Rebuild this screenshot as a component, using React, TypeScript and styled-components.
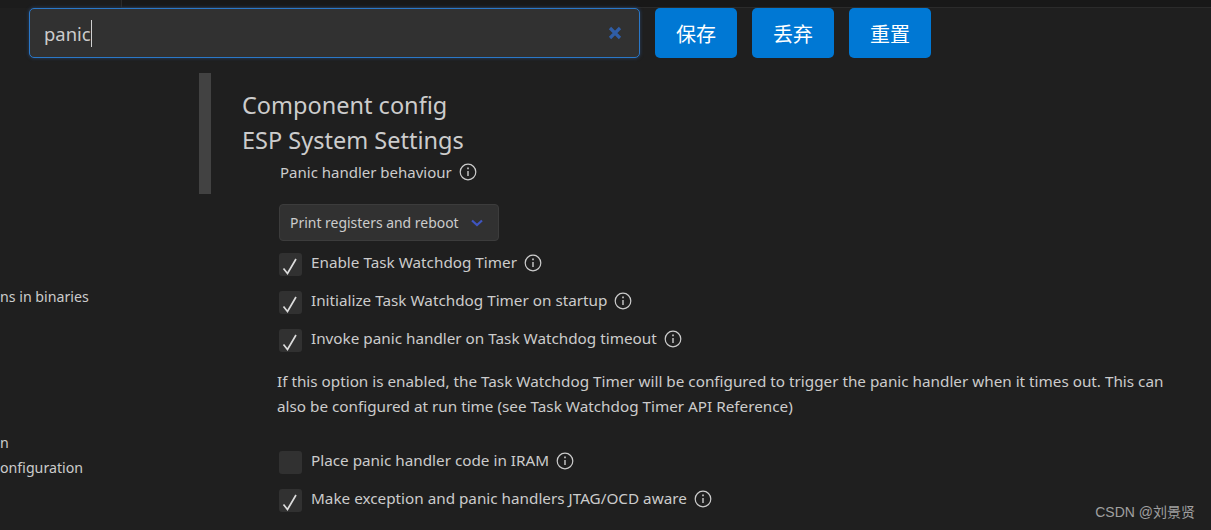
import React from "react";
import styled, { createGlobalStyle } from "styled-components";

const GlobalStyle = createGlobalStyle`
  html, body {
    margin: 0;
    padding: 0;
    background: #1f1f1f;
  }
  body {
    width: 1211px;
    height: 530px;
    overflow: hidden;
    font-family: "Noto Sans", "Noto Sans CJK SC", sans-serif;
  }
`;

const sideItems = [
  { label: "ns in binaries", top: 288 },
  { label: "n", top: 434 },
  { label: "onfiguration", top: 459 },
];

const options = [
  { label: "Enable Task Watchdog Timer", checked: true },
  { label: "Initialize Task Watchdog Timer on startup", checked: true },
  { label: "Invoke panic handler on Task Watchdog timeout", checked: true },
];

const lateOptions = [
  { label: "Place panic handler code in IRAM", checked: false },
  { label: "Make exception and panic handlers JTAG/OCD aware", checked: true },
];

const InfoIcon = () => (
  <InfoSvg viewBox="0 0 18 18" fill="none" stroke="currentColor">
    <circle cx="9" cy="9" r="7.8" strokeWidth="1.2" />
    <path d="M9 8v5" strokeWidth="1.4" />
    <path d="M9 4.6v1.7" strokeWidth="1.6" />
  </InfoSvg>
);

const CheckRow = ({ label, checked }: { label: string; checked: boolean }) => (
  <Row>
    <CheckBox>
      {checked && (
        <svg viewBox="0 0 23 23" width="23" height="23" fill="none">
          <path d="M4.5 15.5l4 5L17 6" stroke="#dcdcdc" strokeWidth="1.7" />
        </svg>
      )}
    </CheckBox>
    <RowLabel>{label}</RowLabel>
    <InfoIcon />
  </Row>
);

const App = () => {
  return (
    <Page>
      <GlobalStyle />
      <TopStrip>
        <TopStripLeft />
        <TopStripRight />
      </TopStrip>
      <Toolbar>
        <SearchBox>
          <SearchText>
            panic
            <Caret />
          </SearchText>
          <svg viewBox="0 0 14 14" width="14" height="14" fill="none">
            <path d="M2 2l10 10M12 2L2 12" stroke="#2f5da6" strokeWidth="3.2" />
          </svg>
        </SearchBox>
        <ActionButton>保存</ActionButton>
        <ActionButton>丢弃</ActionButton>
        <ActionButton>重置</ActionButton>
      </Toolbar>
      <Main>
        <Sidebar>
          {sideItems.map((item) => (
            <SideItem key={item.label} $top={item.top}>
              {item.label}
            </SideItem>
          ))}
        </Sidebar>
        <ScrollThumb />
        <Content>
          <Heading>Component config</Heading>
          <Heading>ESP System Settings</Heading>
          <SettingLabel>
            Panic handler behaviour
            <InfoIcon />
          </SettingLabel>
          <Select>
            Print registers and reboot
            <svg viewBox="0 0 12 8" width="12" height="8" fill="none">
              <path d="M1 1.5l5 4.5 5-4.5" stroke="#3f55c0" strokeWidth="2.2" />
            </svg>
          </Select>
          <Rows>
            {options.map((o) => (
              <CheckRow key={o.label} label={o.label} checked={o.checked} />
            ))}
          </Rows>
          <Description>
            If this option is enabled, the Task Watchdog Timer will be configured to trigger the panic handler when it
            times out. This can also be configured at run time (see Task Watchdog Timer API Reference)
          </Description>
          <Rows>
            {lateOptions.map((o) => (
              <CheckRow key={o.label} label={o.label} checked={o.checked} />
            ))}
          </Rows>
        </Content>
      </Main>
      <Watermark>CSDN @刘景贤</Watermark>
    </Page>
  );
};

const Page = styled.div`
  position: relative;
  width: 1211px;
  height: 530px;
  overflow: hidden;
  background: #1f1f1f;
  color: #cccccc;
`;
const TopStrip = styled.div`
  display: flex;
  height: 8px;
`;
const TopStripLeft = styled.div`
  width: 121px;
  background: #1c1c1c;
  border-right: 1px solid #2b2b2b;
`;
const TopStripRight = styled.div`
  flex: 1;
  background: #181818;
  border-bottom: 1px solid #2b2b2b;
`;
const Toolbar = styled.div`
  display: flex;
  gap: 15px;
  padding-left: 29px;
`;
const SearchBox = styled.div`
  box-sizing: border-box;
  width: 611px;
  height: 50px;
  display: flex;
  align-items: center;
  justify-content: space-between;
  padding: 0 17px 0 14px;
  background: #313131;
  border: 1px solid #2a78c8;
  border-radius: 5px;
  box-shadow: 0 0 3px 1px #24344a;
`;
const SearchText = styled.span`
  display: flex;
  align-items: center;
  font-size: 18.4px;
  color: #cccccc;
`;
const Caret = styled.i`
  width: 1px;
  height: 27px;
  background: #d0d0d0;
`;
const ActionButton = styled.button`
  width: 82px;
  height: 50px;
  padding: 0;
  border: none;
  border-radius: 5px;
  background: #0078d4;
  color: #ffffff;
  font-family: "Noto Sans CJK SC", sans-serif;
  font-size: 20px;
`;
const Main = styled.div`
  display: flex;
  align-items: flex-start;
  padding-top: 15px;
`;
const Sidebar = styled.div`
  position: relative;
  width: 199px;
  flex-shrink: 0;
`;
const SideItem = styled.div<{ $top: number }>`
  position: absolute;
  left: 0;
  top: ${(p) => p.$top - 73}px;
  font-size: 14.2px;
  line-height: 18px;
  white-space: nowrap;
`;
const ScrollThumb = styled.div`
  width: 12px;
  height: 121px;
  flex-shrink: 0;
  background: #424242;
`;
const Content = styled.div`
  flex: 1;
  padding: 15px 0 0 31px;
`;
const Heading = styled.div`
  font-size: 23.5px;
  line-height: 35px;
  color: #cccccc;
`;
const SettingLabel = styled.div`
  display: flex;
  align-items: center;
  gap: 7px;
  margin: 4px 0 0 38px;
  height: 20px;
  font-size: 15px;
`;
const InfoSvg = styled.svg`
  width: 18px;
  height: 18px;
  flex-shrink: 0;
  color: #cccccc;
`;
const Select = styled.div`
  box-sizing: border-box;
  width: 220px;
  height: 37px;
  margin: 22px 0 0 37px;
  padding: 0 15px 0 10px;
  display: flex;
  align-items: center;
  justify-content: space-between;
  background: #313131;
  border: 1px solid #3c3c3c;
  border-radius: 4px;
  font-size: 13.95px;
`;
const Rows = styled.div`
  display: flex;
  flex-direction: column;
  gap: 15px;
  margin: 12px 0 0 37px;
`;
const Row = styled.div`
  display: flex;
  align-items: center;
  height: 23px;
  gap: 7px;
  ${InfoSvg} {
    margin-top: -4px;
  }
`;
const CheckBox = styled.div`
  width: 23px;
  height: 23px;
  margin-right: 2px;
  border-radius: 3px;
  background: #313131;
`;
const RowLabel = styled.span`
  font-size: 15.27px;
  margin-top: -6px;
`;
const Description = styled.p`
  width: 900px;
  margin: 17px 0 32px 35px;
  font-size: 15.27px;
  line-height: 25px;
`;
const Watermark = styled.div`
  position: absolute;
  right: 16px;
  bottom: 9px;
  font-family: "Liberation Sans", "Noto Sans CJK SC", sans-serif;
  font-size: 14px;
  color: #a0a0a0;
`;

export default App;
